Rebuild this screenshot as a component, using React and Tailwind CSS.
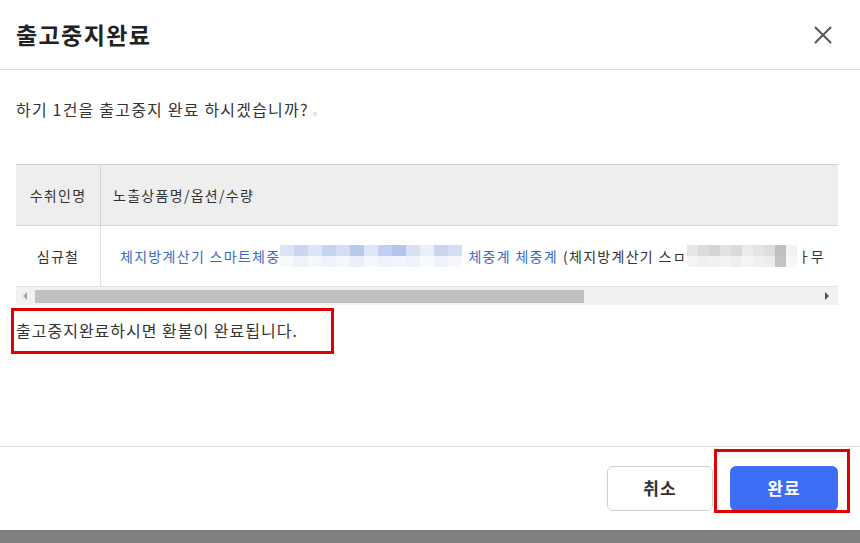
import { X } from "lucide-react";

const font = { fontFamily: '"Noto Sans CJK KR", "Noto Sans", sans-serif' };

const blueTop = ["#dbe5f5", "#c9d7f0", "#dbe5f5", "#c4d3ef", "#d3def3", "#b8caec", "#dde6f6", "#c0d0ee", "#b3c5ea", "#d7e1f4", "#e9eef8", "#c7d5ef", "#d5dff3"];
const blueBot = ["#f7f9fd", "#eef2fa", "#f5f7fc", "#eef2fa", "#f3f6fc", "#eaeff9", "#f6f8fd", "#eef2fa", "#f2f5fb", "#eef2fa", "#f9fafd", "#eef2fa", "#f6f8fd"];
const grayTop = ["#e6e6e6", "#dcdcdc", "#d6d6d6", "#e2e2e2", "#dadada", "#ececec", "#e4e4e4", "#dedede", "#bfbfbf", "#f2f2f2"];
const grayBot = ["#f4f4f4", "#efefef", "#f1f1f1", "#f3f3f3", "#eeeeee", "#f5f5f5", "#f0f0f0", "#ececec", "#c4c4c4", "#f7f7f7"];

function Mosaic({ top, bot, cell }) {
  return (
    <span className="inline-flex flex-col align-middle shrink-0">
      <span className="flex">
        {top.map((c, i) => (
          <span key={i} className="block h-[11px]" style={{ width: cell, background: c }} />
        ))}
      </span>
      <span className="flex">
        {bot.map((c, i) => (
          <span key={i} className="block h-[11px]" style={{ width: cell, background: c }} />
        ))}
      </span>
    </span>
  );
}

export default function App() {
  return (
    <div className="w-[860px] h-[543px] bg-white flex flex-col overflow-hidden text-[#333]" style={font}>
      {/* Header */}
      <div className="h-[70px] shrink-0 border-b border-[#dcdcdc] flex items-center justify-between pl-4 pr-[22px]">
        <h1 className="text-[23px] font-bold text-[#222] tracking-[1.4px]">출고중지완료</h1>
        <X size={30} strokeWidth={1.6} className="text-[#555]" />
      </div>

      {/* Body */}
      <div className="flex-1 px-4 pt-[29px]">
        <p className="text-[16px] leading-5 tracking-[1.2px] text-[#333]">
          하기 1건을 출고중지 완료 하시겠습니까?
          <span className="inline-block w-[4px] h-[4px] ml-[4px] bg-[#e4e4e4]" />
        </p>

        <div className="mt-[45px] w-[822px] border-t border-[#d0d0d0] tracking-[1.3px]">
          <div className="flex h-[61px] bg-[#eeeeee] border-b border-[#d6d6d6] text-[14px] text-[#333]">
            <div className="w-[85px] shrink-0 flex items-center justify-center border-r border-[#d6d6d6]">수취인명</div>
            <div className="flex-1 flex items-center pl-3">노출상품명/옵션/수량</div>
          </div>
          <div className="flex h-[61px] bg-white border-b border-[#e2e2e2] text-[14px]">
            <div className="w-[85px] shrink-0 flex items-center justify-center border-r border-[#e2e2e2] text-[#333]">심규철</div>
            <div className="flex-1 flex items-center pl-[19px] whitespace-nowrap overflow-hidden">
              <span className="text-[#3c6cc1]">체지방계산기 스마트체중</span>
              <Mosaic top={blueTop} bot={blueBot} cell={14} />
              <span className="text-[#3c6cc1] ml-[6px]">체중계 체중계</span>
              <span className="text-[#333] ml-[5px]">(체지방계산기 스ㅁ</span>
              <Mosaic top={grayTop} bot={grayBot} cell={11} />
              <span className="text-[#333] ml-[1px] tracking-normal">ㅏ무</span>
            </div>
          </div>
          {/* Scrollbar */}
          <div className="flex items-center h-[18px] bg-[#f1f1f1]">
            <div className="w-[18px] flex items-center justify-center">
              <span className="block w-0 h-0 border-y-[4px] border-y-transparent border-r-[4px] border-r-[#a3a3a3]" />
            </div>
            <div className="ml-[1px] w-[549px] h-[13px] bg-[#c1c1c1]" />
            <div className="flex-1" />
            <div className="w-[18px] flex items-center justify-center mr-[2px]">
              <span className="block w-0 h-0 border-y-[4px] border-y-transparent border-l-[4px] border-l-[#505050]" />
            </div>
          </div>
        </div>

        <div className="relative mt-[15px]">
          <p className="text-[16px] leading-5 tracking-[1px] text-[#333]">출고중지완료하시면 환불이 완료됩니다.</p>
          <div className="absolute left-[-5px] top-[-12px] w-[323px] h-[46px] border-[3px] border-[#e00000]" />
        </div>
      </div>

      {/* Footer */}
      <div className="h-[84px] shrink-0 border-t border-[#dedede] flex items-center justify-end gap-[17px] pr-[22px] pb-px">
        <button className="w-[106px] h-[45px] rounded-md border border-[#cfcfcf] bg-white text-[17px] font-bold tracking-[1px] text-[#333]">취소</button>
        <div className="relative">
          <button className="w-[108px] h-[45px] rounded-md bg-[#3d6df5] text-[17px] font-bold tracking-[1px] text-white">완료</button>
          <div className="absolute left-[-16px] top-[-17px] w-[136px] h-[64px] border-[3px] border-[#e00000]" />
        </div>
      </div>
      <div className="h-[13px] shrink-0 bg-[#7f7f7f]" />
    </div>
  );
}
